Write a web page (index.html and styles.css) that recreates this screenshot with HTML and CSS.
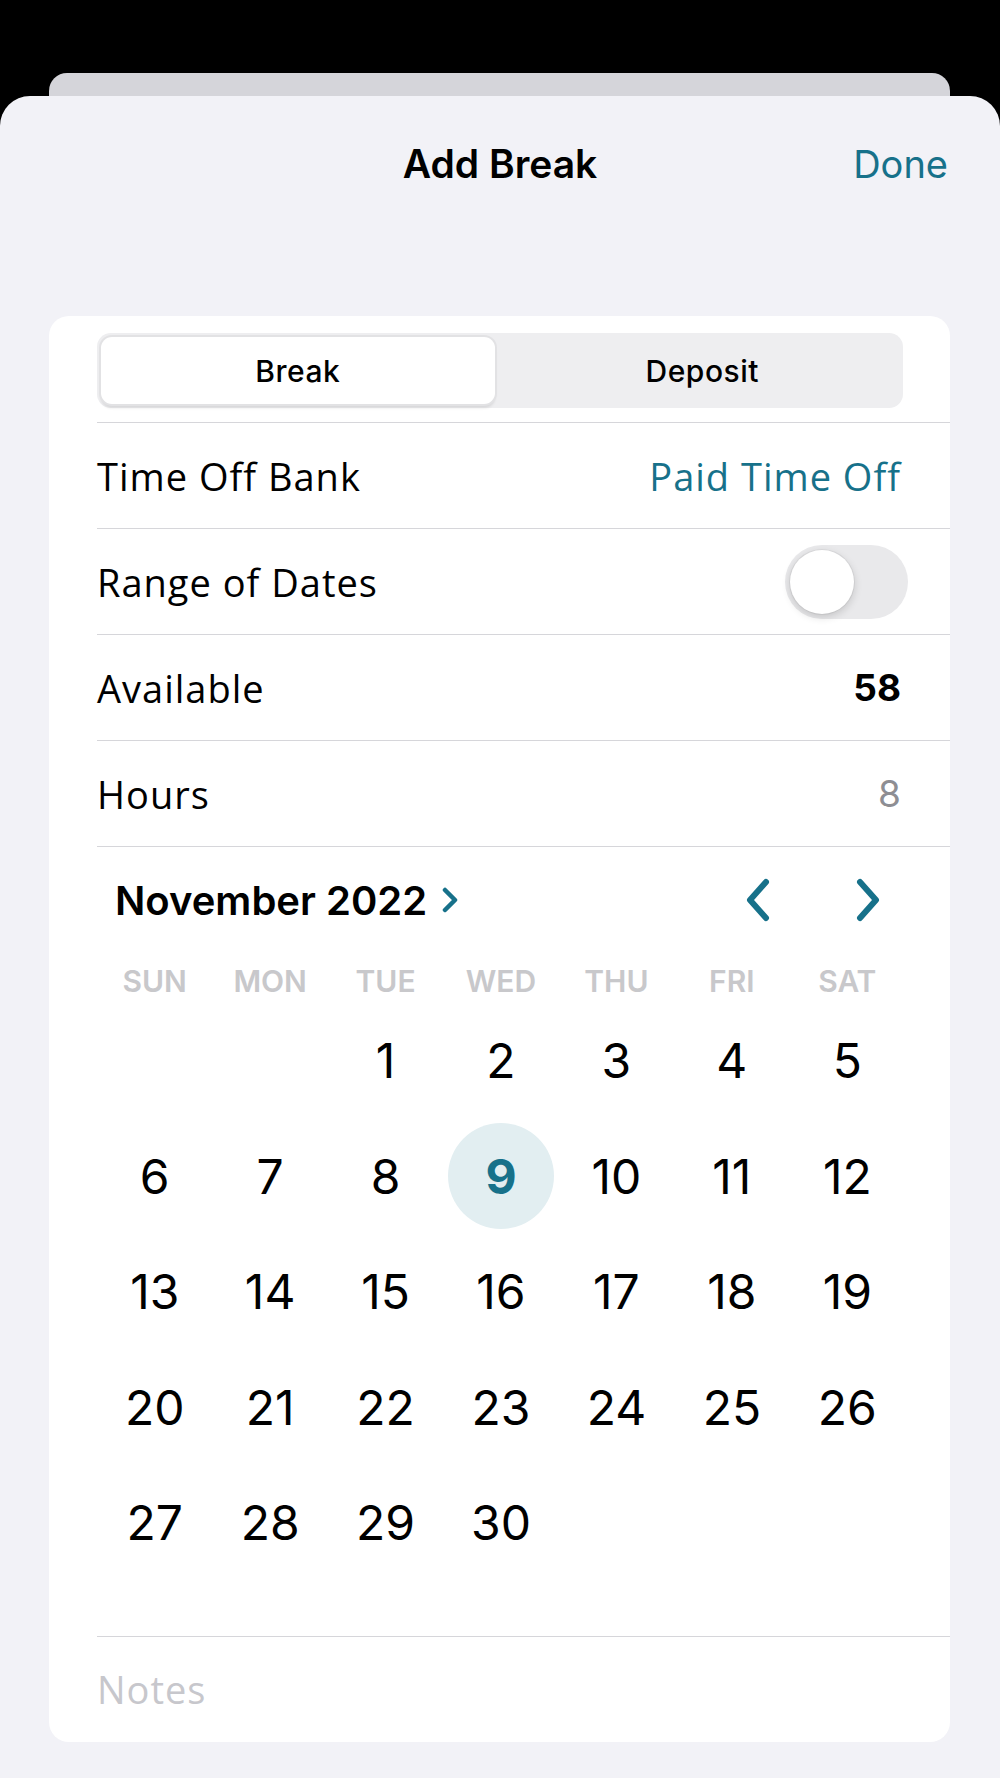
FILE: index.html
```html
<!DOCTYPE html>
<html lang="en">
<head>
    <meta charset="UTF-8">
    <meta name="viewport" content="width=device-width, initial-scale=1.0">
    <link rel="stylesheet" href="styles.css">
    <title>Add Break</title>
</head>
<body>
    <div class="screen">
        <div class="back-card"></div>

        <div class="sheet">
            <div class="sheet-head">
                <span></span>
                <span class="title">Add Break</span>
                <a href="#" class="done">Done</a>
            </div>

            <div class="card">
                <div class="segment-wrap">
                    <div class="segment">
                        <div class="seg-item active">Break</div>
                        <div class="seg-item">Deposit</div>
                    </div>
                </div>

                <div class="row">
                    <span class="label">Time Off Bank</span>
                    <span class="label link">Paid Time Off</span>
                </div>
                <div class="row">
                    <span class="label">Range of Dates</span>
                    <span class="toggle"><span class="knob"></span></span>
                </div>
                <div class="row">
                    <span class="label">Available</span>
                    <span class="num strong">58</span>
                </div>
                <div class="row">
                    <span class="label">Hours</span>
                    <span class="num muted">8</span>
                </div>

                <div class="calendar">
                    <div class="cal-head">
                        <div class="month">
                            November 2022
                            <svg class="month-chev" width="18" height="26" viewBox="0 0 18 26"><polyline points="4,3 14,13 4,23" /></svg>
                        </div>
                        <div class="nav">
                            <svg width="26" height="44" viewBox="0 0 26 44"><polyline points="21,4 5,22 21,40" /></svg>
                            <svg width="26" height="44" viewBox="0 0 26 44"><polyline points="5,4 21,22 5,40" /></svg>
                        </div>
                    </div>

                    <div class="weekdays">
                        <span>SUN</span><span>MON</span><span>TUE</span><span>WED</span><span>THU</span><span>FRI</span><span>SAT</span>
                    </div>

                    <div class="days">
                        <span></span><span></span>
                        <span>1</span><span>2</span><span>3</span><span>4</span><span>5</span>
                        <span>6</span><span>7</span><span>8</span><span class="today"><b>9</b></span><span>10</span><span>11</span><span>12</span>
                        <span>13</span><span>14</span><span>15</span><span>16</span><span>17</span><span>18</span><span>19</span>
                        <span>20</span><span>21</span><span>22</span><span>23</span><span>24</span><span>25</span><span>26</span>
                        <span>27</span><span>28</span><span>29</span><span>30</span>
                    </div>
                </div>

                <div class="notes">Notes</div>
            </div>
        </div>
    </div>
</body>
</html>
```

FILE: styles.css
```css
*{
    margin: 0;
    padding: 0;
    box-sizing: border-box;
}

body{
    background: #000;
    font-family: Inter, "Liberation Sans", sans-serif;
    color: #000;
}

.screen{
    width: 1000px;
    height: 1778px;
    padding-top: 73px;
    display: flex;
    flex-direction: column;
    overflow: hidden;
}

.back-card{
    height: 23px;
    margin: 0 50px 0 49px;
    background: #d5d5da;
    border-radius: 18px 18px 0 0;
}

.sheet{
    flex: 1;
    background: #f2f2f7;
    border-radius: 30px 30px 0 0;
    padding-top: 40px;
}

.sheet-head{
    display: grid;
    grid-template-columns: 1fr auto 1fr;
    align-items: center;
    height: 56px;
    padding: 0 52px;
}

.title{
    font-size: 39px;
    font-weight: 600;
    line-height: 56px;
}

.done{
    justify-self: end;
    color: #17718a;
    font-size: 38px;
    font-weight: 400;
    line-height: 56px;
    text-decoration: none;
}

.card{
    margin: 124px 50px 0 49px;
    background: #fff;
    border-radius: 20px;
    padding-left: 48px;
}

.segment-wrap{
    padding: 17px 47px 14px 0;
    border-bottom: 1px solid #d6d6da;
}

.segment{
    display: flex;
    height: 75px;
    background: #eeeef0;
    border-radius: 14px;
    padding: 4px;
}

.seg-item{
    flex: 1;
    display: flex;
    justify-content: center;
    align-items: center;
    font-size: 30px;
    font-weight: 500;
    letter-spacing: 0.5px;
    border-radius: 11px;
}

.seg-item.active{
    margin-right: 11px;
    background: #fff;
    box-shadow: 0 0 0 2px #e2e2e4, 0 4px 3px rgba(0, 0, 0, 0.1);
}

.row{
    height: 106px;
    display: flex;
    justify-content: space-between;
    align-items: center;
    padding-right: 49px;
    border-bottom: 1px solid #d6d6da;
}

.label{
    font-family: "Open Sans", sans-serif;
    font-size: 38px;
    letter-spacing: 1px;
}

.link{
    color: #17718a;
}

.num{
    font-size: 37px;
}

.strong{
    font-weight: 700;
}

.muted{
    color: #8e8e93;
}

.toggle{
    display: flex;
    width: 123px;
    height: 74px;
    margin-right: -7px;
    padding: 5px;
    background: #e9e9eb;
    border-radius: 37px;
}

.knob{
    width: 64px;
    height: 64px;
    border-radius: 50%;
    background: #fff;
    box-shadow: 0 0 0 1px rgba(0, 0, 0, 0.05), 0 3px 8px rgba(0, 0, 0, 0.16);
}

.calendar{
    padding: 18px 45px 55px 0;
    border-bottom: 1px solid #d6d6da;
}

.cal-head{
    height: 70px;
    display: flex;
    justify-content: space-between;
    align-items: center;
    padding: 0 24px 0 18px;
}

.month{
    display: flex;
    align-items: center;
    gap: 14px;
    font-size: 40px;
    font-weight: 600;
}

.month-chev polyline, .nav polyline{
    fill: none;
    stroke: #17718a;
    stroke-linecap: round;
    stroke-linejoin: round;
}

.month-chev polyline{
    stroke-width: 4.5;
}

.nav{
    display: flex;
    gap: 84px;
}

.nav polyline{
    stroke-width: 6;
}

.weekdays{
    display: grid;
    grid-template-columns: repeat(7, 1fr);
    margin-top: 26px;
    height: 40px;
    align-items: center;
    text-align: center;
    font-size: 30px;
    font-weight: 600;
    color: #c8c8cb;
}

.days{
    display: grid;
    grid-template-columns: repeat(7, 1fr);
    grid-auto-rows: 115.5px;
    margin-top: 2px;
    font-size: 48px;
}

.days span{
    display: flex;
    justify-content: center;
    align-items: center;
}

.days .today b{
    display: flex;
    justify-content: center;
    align-items: center;
    width: 106px;
    height: 106px;
    border-radius: 50%;
    background: #e2eef1;
    color: #17718a;
    font-weight: 700;
}

.notes{
    height: 105px;
    display: flex;
    align-items: center;
    font-family: "Open Sans", sans-serif;
    font-size: 38px;
    letter-spacing: 1px;
    color: #c7c7cc;
}
```
